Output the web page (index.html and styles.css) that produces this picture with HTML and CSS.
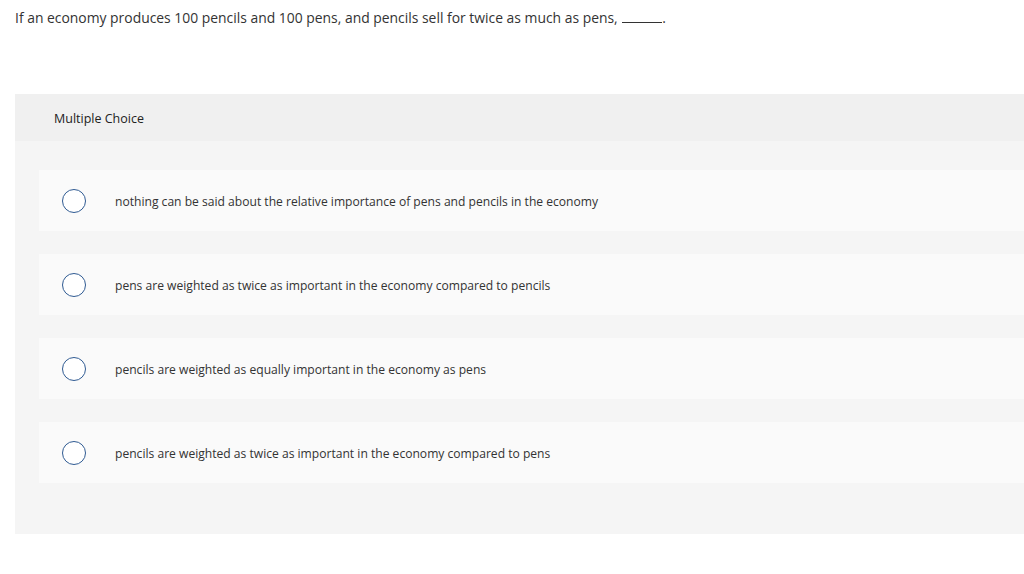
FILE: index.html
```html
<!DOCTYPE html>
<html>
<head>
<meta charset="utf-8">
<link rel="stylesheet" href="styles.css">
</head>
<body>
<p class="question">If an economy produces 100 pencils and 100 pens, and pencils sell for twice as much as pens, <span class="blank"></span>.</p>
<div class="panel">
  <div class="panel-header">Multiple Choice</div>
  <div class="options">
    <div class="option"><span class="radio"></span><span class="label">nothing can be said about the relative importance of pens and pencils in the economy</span></div>
    <div class="option"><span class="radio"></span><span class="label">pens are weighted as twice as important in the economy compared to pencils</span></div>
    <div class="option"><span class="radio"></span><span class="label">pencils are weighted as equally important in the economy as pens</span></div>
    <div class="option"><span class="radio"></span><span class="label">pencils are weighted as twice as important in the economy compared to pens</span></div>
  </div>
</div>
</body>
</html>
```
FILE: styles.css
```css
html, body {
  margin: 0;
  padding: 0;
  background: #ffffff;
  font-family: "Open Sans", "Lato", sans-serif;
  color: #333333;
}
.question {
  margin: 0;
  padding: 10px 0 0 15px;
  font-size: 13.9px;
  line-height: 16px;
  color: #333;
}
.blank {
  display: inline-block;
  width: 40px;
  border-bottom: 1px solid #333;
  margin-left: 1px;
}
.panel {
  margin: 68px 0 0 15px;
  background: #f5f5f5;
  height: 440px;
}
.panel-header {
  background: #f0f0f0;
  height: 47px;
  box-sizing: border-box;
  padding: 1px 0 0 39px;
  display: flex;
  align-items: center;
  font-size: 12.5px;
  color: #222;
}
.options {
  padding: 29px 0 0 24px;
  display: flex;
  flex-direction: column;
  gap: 23px;
}
.option {
  background: #fafafa;
  height: 61px;
  display: flex;
  align-items: center;
  padding-left: 23px;
}
.radio {
  width: 22px;
  height: 22px;
  border: 1.5px solid #2f5a92;
  border-radius: 50%;
  background: #fff;
  flex: none;
}
.label {
  margin-left: 29px;
  padding-top: 2px;
  font-size: 12.1px;
  color: #333;
}
```
